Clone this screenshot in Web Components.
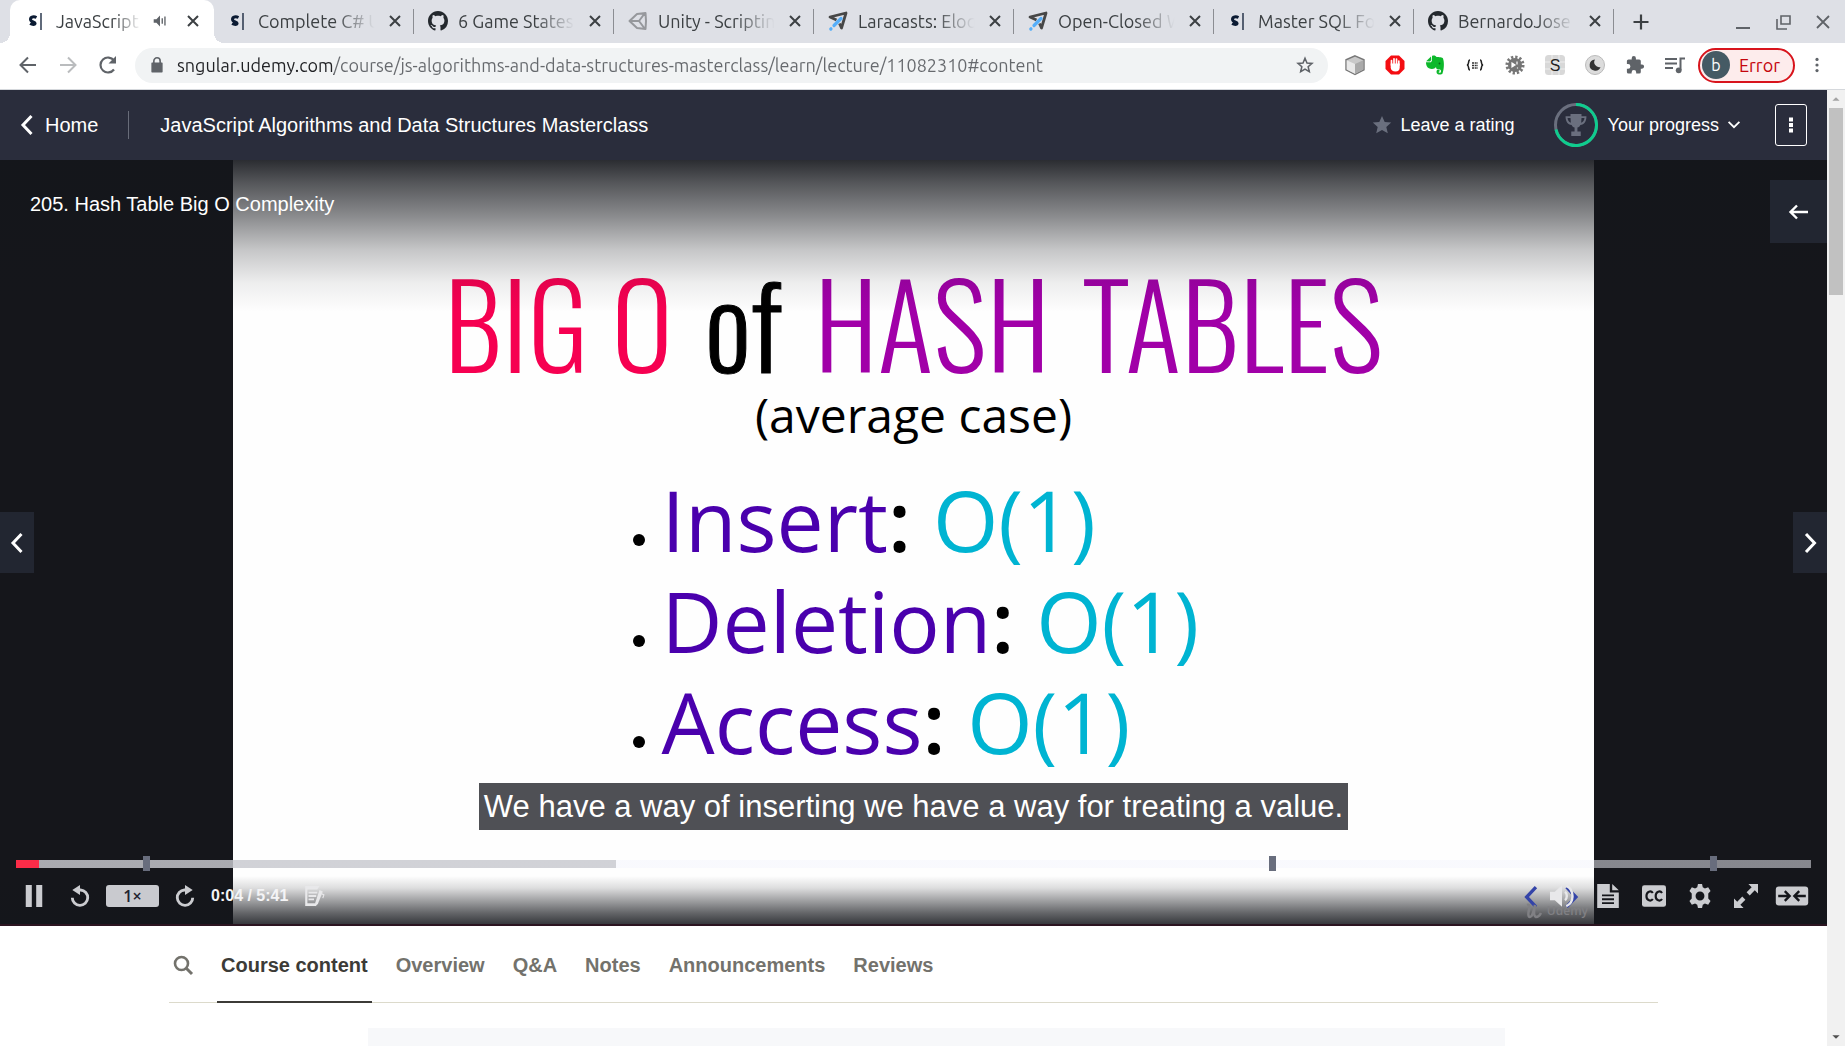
<!DOCTYPE html>
<html lang="en">
<head>
<meta charset="utf-8">
<title>JavaScript Algorithms and Data Structures Masterclass</title>
<style>
html,body{margin:0;height:100%}
body{overflow:hidden;background:#fff;font-family:"Liberation Sans",Arial,sans-serif}
</style>
</head>
<body>
<app-window></app-window>
<script>
const SHAPES = {
  close:'<path d="M5 5l10 10M15 5L5 15" stroke="currentColor" stroke-width="2" fill="none"/>',
  sound:'<path d="M3 8h3l4-4v12l-4-4H3z" fill="currentColor"/><path d="M12.500 7v6M15.500 5v10" stroke="currentColor" stroke-width="1.500"/>',
  sng:'<path d="M11.500 5.500C9 4.300 5.500 4.600 5.500 7.300c0 3 4.600 2.300 4.600 4 0 1.600-3 1.300-5 .2" transform="translate(-1 1)" fill="none" stroke="#0b1b33" stroke-width="3"/><path d="M15 2v17" stroke="#0b1b33" stroke-width="1.300"/>',
  github:'<path transform="scale(1.25)" fill="#24292e" d="M8 0C3.580 0 0 3.580 0 8c0 3.540 2.290 6.530 5.470 7.590.4.070.550-.170.550-.380 0-.190-.010-.820-.010-1.490-2.010.370-2.530-.490-2.690-.940-.090-.230-.480-.940-.820-1.130-.280-.150-.680-.520-.010-.530.630-.010 1.080.580 1.230.820.720 1.210 1.870.870 2.330.660.070-.520.280-.870.510-1.070-1.780-.2-3.640-.890-3.640-3.950 0-.870.310-1.590.820-2.150-.080-.2-.360-1.020.080-2.120 0 0 .670-.210 2.200.820.640-.180 1.320-.270 2-.270s1.360.090 2 .270c1.530-1.040 2.200-.820 2.200-.820.440 1.100.160 1.920.080 2.120.510.560.820 1.270.820 2.150 0 3.070-1.870 3.750-3.650 3.950.290.250.540.730.540 1.480 0 1.070-.010 1.930-.010 2.200 0 .210.150.460.550.380A8.010 8.010 0 0 0 16 8c0-4.420-3.580-8-8-8z"/>',
  unity:'<path d="M1.500 10L9 3l8.500-1 .500 8-.500 8L9 17zM2 10h9M11 10l6-8M11 10l6 8" fill="none" stroke="#96989c" stroke-width="2" stroke-linejoin="round"/>',
  laracasts:'<path d="M8.500 9L2 6l16-4-4.500 15-2-4.500" fill="none" stroke="#474747" stroke-width="2.800" stroke-linejoin="round"/><path d="M13 7.500L6 14.500M2.800 18l.2-.2" stroke="#55aef9" stroke-width="3.200" stroke-linecap="round" fill="none"/>',
  plus:'<path d="M10 2.500v15M2.500 10h15" stroke="currentColor" stroke-width="2.200"/>',
  minimize:'<path d="M3 16h14" stroke="currentColor" stroke-width="2"/>',
  restore:'<path d="M8 4h9v8H8zM4 7v10h10" stroke="currentColor" stroke-width="1.600" fill="none"/>',
  winclose:'<path d="M4 4l12 12M16 4L4 16" stroke="currentColor" stroke-width="1.800"/>',
  back:'<path d="M18 10H3M10 2.500L2.500 10l7.500 7.500" stroke="currentColor" stroke-width="2" fill="none"/>',
  forward:'<path d="M2 10h15M10 2.500l7.500 7.500-7.500 7.500" stroke="currentColor" stroke-width="2" fill="none"/>',
  reload:'<path d="M16 14.500A7.500 7.500 0 1 1 16 5.500" stroke="currentColor" stroke-width="2.200" fill="none"/><path d="M18 1v7.500h-7.500z" fill="currentColor"/>',
  lock:'<path d="M4.500 8h11v9.500h-11z" fill="currentColor" stroke="currentColor" stroke-width="1.500" stroke-linejoin="round"/><path d="M6.500 8V5.500a3.500 3.500 0 0 1 7 0V8" stroke="currentColor" stroke-width="1.800" fill="none"/>',
  star:'<path d="M10 2.500l2.200 5.200 5.600.5-4.300 3.700 1.300 5.500L10 14.500l-4.800 2.900 1.300-5.500L2.200 8.200l5.600-.5z" fill="none" stroke="currentColor" stroke-width="1.700"/>',
  fullstar:'<path d="M10 1l2.700 6 6.500.6-4.900 4.300 1.500 6.400L10 14.900l-5.800 3.400 1.500-6.400L.8 7.600 7.300 7z" fill="currentColor"/>',
  cube:'<path d="M10 .8l9 4v10l-9 4.700-9-4.700v-10z" fill="#c9c9c9" stroke="#777" stroke-width="1.400"/><path d="M1.700 5.200L10 9v9.700l-8.300-4.200z" fill="#e9e9e9"/><path d="M10 9l8.300-3.800v9.300L10 18.700z" fill="#aaa"/>',
  hand:'<path d="M6 .5h8L19.500 6v8L14 19.500H6L.5 14V6z" fill="#f40d12"/><path d="M6.500 10V5.500M9 9V3.800M11.500 9V4M13.800 10V6" stroke="#fff" stroke-width="1.700" stroke-linecap="round"/><path d="M5.700 8.500h9v4c0 2.500-1.500 4-4.200 4s-4.800-1.500-4.800-4z" fill="#fff"/>',
  elephant:'<path d="M6 1.500L1.200 6.200 5 6.500 6.300 5z" fill="#0db82b"/><path d="M7 1c2-1 4 0 4.500 1 2.500 0 6 .2 6.500 1.500 1.500 4 1 11-.5 15-1 1.600-6 1.600-6-1.500 0-2 1.500-2.700 3-2.300v1.700c-1 0-1.200.8-.5 1.200 1.500.6 2-.3 2-1.600 0-2-2.500-1.500-4-2-.8-.4-.8-1-1-2-1.500 3-8 2.200-9-.5C1 9.500 1 8 1 7.200h5L7 5.500z" fill="#0db82b"/><circle cx="14.500" cy="8.500" r=".9" fill="#076818"/>',
  braces:'<path d="M5 5C2.500 5 4.800 9.500 2 10c2.800.5.500 5 3 5M15 5c2.500 0 .2 4.500 3 5-2.800.5-.5 5-3 5" stroke="#222" stroke-width="1.600" fill="none"/><path d="M7 8h6M7 10.500h6M7 13h6" stroke="#333" stroke-width="1.300" stroke-dasharray="2 .7"/>',
  bug:'<circle cx="10" cy="10" r="7.800" fill="none" stroke="#777" stroke-width="3.500" stroke-dasharray="2.200 1.880"/><circle cx="10" cy="10" r="7" fill="#757575"/><path d="M7 8l3 2-3 2zM12 6.500v3M12.500 12.500v1" stroke="#fff" stroke-width="1.200" fill="#fff"/>',
  s:'<rect width="20" height="20" rx="3.500" fill="#d8d8d8"/><path d="M0 7h20M7 0v20M14 0v20M0 14h20" stroke="#eee"/><text x="10" y="15.500" text-anchor="middle" font-family="Liberation Sans" font-size="16" fill="#222">S</text>',
  moon:'<circle cx="10" cy="10" r="9.500" fill="#dcdcdc" stroke="#bbb"/><path d="M10 4.500A5.600 5.600 0 1 0 15.500 12 5 5 0 0 1 10 4.500z" fill="#333"/>',
  puzzle:'<path d="M17 9.500h-1.200V6A1.600 1.600 0 0 0 14.200 4.400h-3.300V3.200a2.100 2.100 0 0 0-4.200 0v1.200H3.500A1.600 1.600 0 0 0 1.900 6v3.100h1.200a2.300 2.300 0 0 1 0 4.600H1.900V17a1.600 1.600 0 0 0 1.600 1.600h3.100v-1.200a2.300 2.300 0 0 1 4.600 0v1.200h3A1.600 1.600 0 0 0 15.800 17v-3.300H17a2.100 2.100 0 0 0 0-4.200z" fill="currentColor"/>',
  queue:'<path d="M0 4h12M0 8.500h12M0 13h8M15.500 15V3.500h4.500" stroke="currentColor" stroke-width="2" fill="none"/><circle cx="13.700" cy="15.300" r="2.900" fill="currentColor"/>',
  kebab:'<g fill="currentColor"><circle cx="10" cy="3" r="2"/><circle cx="10" cy="10" r="2"/><circle cx="10" cy="17" r="2"/></g>',
  dots:'<path fill="currentColor" d="M8 2.500h4v4H8zM8 8h4v4H8zM8 13.500h4v4H8z"/>',
  prev:'<path d="M14.500 1L6 10l8.500 9" fill="none" stroke="currentColor" stroke-width="3"/>',
  next:'<path d="M6 1l8.500 9L6 19" fill="none" stroke="currentColor" stroke-width="3"/>',
  down:'<path d="M4 6.500l6 6 6-6" fill="none" stroke="currentColor" stroke-width="2"/>',
  left:'<path d="M19 10H2M8 3.500L1.500 10 8 16.500" fill="none" stroke="currentColor" stroke-width="2.400"/>',
  trophy:'<path d="M5 0h10v2h4.500c0 5-2 7.500-5.500 8-.6 1.200-1.500 2-2.700 2.300V16h3v4H5.700v-4h3v-3.700C7.500 12 6.600 11.200 6 10 2.500 9.500.500 7 .500 2H5zM2.300 3.700c.3 2.300 1.200 3.800 3 4.300L5 3.700zM17.700 3.700H15L14.700 8c1.800-.5 2.700-2 3-4.300z" fill="#6a6f7e"/>',
  pause:'<path fill="currentColor" d="M2.500 0H8v20H2.500zM12 0h5.500v20H12z"/>',
  rewind:'<path d="M9 4.500h1.500A7 7 0 1 1 3 11.500" fill="none" stroke="currentColor" stroke-width="2.600"/><path d="M10 0v9L3 4.500z" fill="currentColor"/>',
  ahead:'<path d="M11 4.500H9.500A7 7 0 1 0 17 11.500" fill="none" stroke="currentColor" stroke-width="2.600"/><path d="M10 0v9l7-4.500z" fill="currentColor"/>',
  note:'<path d="M2 1h13l-2 3H4v12.500h8V19H2z" fill="currentColor"/><path d="M5 7h8M5 10h7M5 13h5" stroke="currentColor" stroke-width="1.600"/><path d="M15 4.500l3 1.300-4.500 11.500-2.500 2 .2-3.300z" fill="currentColor"/><path d="M17 8l2 1-1 3" fill="none" stroke="currentColor"/>',
  volume:'<path fill="currentColor" d="M0 6.500h4L10 1v18l-6-5.500H0z"/><path d="M12.500 6.500c2 1.500 2 5.500 0 7M13.500 1.500c7 3 7 14 0 17" fill="none" stroke="currentColor" stroke-width="2"/>',
  transcript:'<path fill="currentColor" d="M1 0h10.500v7H19v13H1zM13.500 0L19 5.300h-5.500z"/><path d="M5 9.500h10M5 12.700h10M5 16h10" stroke="#15161b" stroke-width="1.500"/>',
  cc:'<rect y="1" width="20" height="18" rx="2" fill="currentColor"/><path d="M9 7.500c-1.500-2.200-5.300-1.500-5.300 2.500s3.800 4.700 5.300 2.500M16.700 7.500c-1.500-2.200-5.300-1.500-5.300 2.500s3.800 4.700 5.300 2.500" fill="none" stroke="#15161b" stroke-width="1.800"/>',
  gear:'<path fill="currentColor" fill-rule="evenodd" d="M8.300 0h3.400l.6 2.800 1.800 1 2.700-1 2 3-1.900 2.200v4l1.900 2.200-2 3-2.700-1-1.800 1-.6 2.800H8.300l-.6-2.800-1.800-1-2.700 1-2-3L3.100 12V8L1.200 5.800l2-3 2.700 1 1.800-1zM10 6.300a3.700 3.700 0 1 0 0 7.400 3.700 3.700 0 0 0 0-7.400z"/>',
  expand:'<path fill="currentColor" d="M12 0h8v8l-2.700-2.700-4.200 4.200-2.600-2.600 4.200-4.200zM8 20H0v-8l2.700 2.700 4.200-4.200 2.600 2.600-4.200 4.200z"/>',
  narrow:'<rect x="-3.500" y="2" width="27" height="16" rx="2.500" fill="currentColor"/><path d="M-1.500 10h9M4 6l4 4-4 4M21.500 10h-9M16 6l-4 4 4 4" stroke="#15161b" stroke-width="2" fill="none"/>',
  search:'<circle cx="8.500" cy="8.500" r="6.500" fill="none" stroke="currentColor" stroke-width="2.600"/><path d="M13 13l6 6" stroke="currentColor" stroke-width="3"/>',
  triup:'<path d="M6 12l4-4 4 4z" fill="currentColor"/>',
  tridown:'<path d="M6 8l4 4 4-4z" fill="currentColor"/>'
};

const RESET = `*{box-sizing:border-box}
button{font:inherit;color:inherit;background:none;border:0;padding:0;margin:0;display:flex;align-items:center;justify-content:center;flex:none}
a{color:inherit;text-decoration:none}`;

class BaseElement extends HTMLElement {
  connectedCallback() {
    if (this.shadowRoot) return;
    this.attachShadow({mode:'open'}).innerHTML = `<style>${RESET}${this.styles()}</style>${this.markup()}`;
  }
  styles() { return ''; }
  markup() { return ''; }
}
const define = (name, styles, markup) => customElements.define(name, class extends BaseElement {
  styles() { return styles; }
  markup() { return typeof markup === 'function' ? markup(this) : markup; }
});

define('ui-icon',
  ':host{display:block;width:20px;height:20px;flex:none}svg{display:block;width:100%;height:100%;overflow:visible}',
  el => `<svg viewBox="0 0 20 20" aria-hidden="true">${SHAPES[el.getAttribute('name')]}</svg>`);

define('browser-tab', `
:host{display:flex;box-sizing:border-box;align-items:center;flex:0 0 200px;min-width:0;height:43px;padding:0 9px 1px 14px;position:relative;color:#3c4043}
:host([line])::after{content:"";position:absolute;right:0;top:9px;width:1px;height:25px;background:#8b8d92}
:host([active]){flex-basis:204px;background:#fff;border-radius:10px 10px 0 0;padding-left:16px;padding-right:11px}
:host([active])::before,:host([active])::after{content:"";position:absolute;bottom:0;width:10px;height:10px}
:host([active])::before{left:-10px;background:radial-gradient(circle at 0 0,transparent 10px,#fff 10px)}
:host([active])::after{right:-10px;background:radial-gradient(circle at 100% 0,transparent 10px,#fff 10px)}
.title{flex:1;min-width:0;overflow:hidden;white-space:nowrap;margin:0 8px 0 10px;font-size:18px;line-height:24px;text-align:left;justify-content:flex-start;-webkit-mask-image:linear-gradient(to right,#000 65%,transparent 98%);mask-image:linear-gradient(to right,#000 65%,transparent 98%)}
.sound{width:18px;height:18px;margin-right:14px;color:#5f6368}
`, el => `<ui-icon name="${el.getAttribute('icon')}"></ui-icon><button class="title"><slot></slot></button>
${el.hasAttribute('sound') ? '<ui-icon class="sound" name="sound"></ui-icon>' : ''}<button aria-label="Close tab"><ui-icon name="close"></ui-icon></button>`);

define('tab-strip', `
:host{display:flex;height:43px;background:#dee0e6;padding-left:10px;color:#3c4043}
.new{width:54px;height:43px}
.win{margin-left:auto;display:flex;gap:20px;padding-right:12px;height:43px;align-items:center;color:#5f6368}
`, `
<browser-tab active sound icon="sng">JavaScript Algorithms</browser-tab>
<browser-tab line icon="sng">Complete C# Unity</browser-tab>
<browser-tab line icon="github">6 Game States</browser-tab>
<browser-tab line icon="unity">Unity - Scripting</browser-tab>
<browser-tab line icon="laracasts">Laracasts: Eloquent</browser-tab>
<browser-tab line icon="laracasts">Open-Closed Wins</browser-tab>
<browser-tab line icon="sng">Master SQL For</browser-tab>
<browser-tab line icon="github">BernardoJose</browser-tab>
<button class="new" aria-label="New tab"><ui-icon name="plus"></ui-icon></button>
<div class="win"><button aria-label="Minimize"><ui-icon name="minimize"></ui-icon></button><button aria-label="Restore"><ui-icon name="restore"></ui-icon></button><button aria-label="Close"><ui-icon name="winclose"></ui-icon></button></div>`);

define('tool-bar', `
:host{display:flex;box-sizing:border-box;align-items:center;height:47px;border-bottom:1px solid #d5d8dc;background:#fff;padding:0 18px 2px;color:#5f6368}
.nav{display:flex;gap:20px;margin-right:17px}
.nav button:nth-child(2){color:#babcbe}
.omni{flex:1;display:flex;align-items:center;height:35px;border-radius:18px;background:#f1f3f4;padding:0 14px 0 13px}
.omni ui-icon:first-child{width:18px;height:18px}
input{flex:1;min-width:0;border:0;outline:0;padding:0;margin:0 12px 0 11px;height:30px;font:18px/24px Ubuntu,"Noto Sans",sans-serif;color:#5f6368;background:linear-gradient(to right,#202124 157px,#66696d 157px);-webkit-background-clip:text;background-clip:text;-webkit-text-fill-color:transparent}
.ext{display:flex;gap:20px;margin:0 13px 0 17px}
.pill{height:35px;border:2px solid #d8141c;border-radius:18px;background:#fdecec;color:#c5050c;font-size:18px;line-height:24px;padding:0 13px 0 2px;gap:9px}
.pill b{display:flex;align-items:center;justify-content:center;width:28px;height:28px;border-radius:50%;background:#455a64;color:#fff;font-size:16px;font-weight:400}
.more{margin-left:12px}
.more ui-icon{height:16px}
`, `
<div class="nav"><button aria-label="Back"><ui-icon name="back"></ui-icon></button><button aria-label="Forward"><ui-icon name="forward"></ui-icon></button><button aria-label="Reload"><ui-icon name="reload"></ui-icon></button></div>
<div class="omni"><ui-icon name="lock"></ui-icon><input aria-label="Address" value="sngular.udemy.com/course/js-algorithms-and-data-structures-masterclass/learn/lecture/11082310#content"><button aria-label="Bookmark"><ui-icon name="star"></ui-icon></button></div>
<div class="ext">${['cube','hand','elephant','braces','bug','s','moon','puzzle','queue'].map(n => `<button aria-label="${n}"><ui-icon name="${n}"></ui-icon></button>`).join('')}</div>
<button class="pill"><b>b</b>Error</button>
<button class="more" aria-label="Menu"><ui-icon name="kebab"></ui-icon></button>`);

define('course-header', `
:host{display:flex;box-sizing:border-box;align-items:center;height:70px;background:#2a2d3c;color:#fff;padding:0 20px 1px 17px;font-size:20px;line-height:24px}
.home{display:flex;align-items:center;gap:8px}
.home ui-icon{width:20px;height:22px}
.rule{width:1px;height:28px;background:#686c79;margin:0 31px 0 30px}
h1{font:inherit;margin:0;flex:1;min-width:0;white-space:nowrap}
.small{font-size:18px;margin-right:38px}
.small ui-icon{color:#6a6f7e;margin-right:9px}
.progress{margin-right:32px}
.ring{display:block;width:46px;height:46px;margin-right:9px}
.progress>ui-icon:last-child{color:#fff;width:18px;height:18px;margin:0 0 0 6px}
.box{width:32px;height:42px;border:1px solid #fff;border-radius:3px}
`, `
<a class="home" href="#"><ui-icon name="prev"></ui-icon>Home</a><span class="rule"></span>
<h1>JavaScript Algorithms and Data Structures Masterclass</h1>
<button class="small"><ui-icon name="fullstar"></ui-icon>Leave a rating</button>
<button class="small progress"><svg class="ring" viewBox="0 0 46 46" fill="none" stroke-width="3"><circle cx="23" cy="23" r="20.500" stroke="#6a6f7e"/><path d="M23 2.500A20.500 20.500 0 1 1 3 27.500" stroke="#0fcc8e"/><g transform="translate(12 12) scale(1.100)">${SHAPES.trophy.replace('/>', ' stroke="none"/>')}</g></svg>Your progress<ui-icon name="down"></ui-icon></button>
<button class="box" aria-label="More"><ui-icon name="dots"></ui-icon></button>`);

define('slide-row', `
:host{display:flex;align-items:center;height:101px;font-size:84px;line-height:101px;white-space:pre;color:#4a00ad}
i{width:12px;height:12px;border-radius:50%;background:#000;margin:40px 17px 0 0}
b{color:#000;font-weight:600}
span{color:#00b4d2}
`, el => `<i></i><slot></slot><b>:</b><span> ${el.getAttribute('cost')}</span>`);

define('lecture-slide', `
:host{display:flex;box-sizing:border-box;flex-direction:column;align-items:center;height:100%;aspect-ratio:16/9;background:#fefefe;font-family:"Open Sans","Noto Sans",sans-serif;color:#000;padding-top:96px;overflow:hidden}
h2{display:flex;gap:32px;margin:0;font:300 116px/130px Oswald,"Liberation Sans Narrow",sans-serif;white-space:nowrap;color:#a100a8}
.pink{color:#f60051}.of{color:#000;font-weight:300;-webkit-text-stroke:1px #000}
p{margin:0;font-size:48px;line-height:58px}
.list{margin-top:25px;align-self:flex-start;padding-left:400px}
`, `
<h2><span class="pink">BIG O</span><span class="of">of</span><span>HASH</span><span>TABLES</span></h2>
<p>(average case)</p>
<div class="list"><slide-row cost="O(1)">Insert</slide-row><slide-row cost="O(1)">Deletion</slide-row><slide-row cost="O(1)">Access</slide-row></div>`);

define('control-bar', `
:host{display:flex;flex-direction:column;padding:0 16px;color:#cbccd0}
.seek{position:relative;display:flex;height:15px;align-items:center}
input{appearance:none;-webkit-appearance:none;width:100%;height:8px;margin:0;border-radius:0;background:linear-gradient(to right,#fb2c48 0 1.300%,rgba(200,201,207,.83) 1.300% 33.400%,rgba(244,245,253,.51) 33.400%)}
input::-webkit-slider-thumb{-webkit-appearance:none;width:0;height:0}
.seek i{position:absolute;top:0;width:7px;height:15px;background:#686d7d}
.row{display:flex;align-items:center;height:50px}
.row>*{flex:none}
.left{display:flex;align-items:center;gap:15px}
.left ui-icon{width:22px;height:22px}
.speed{width:53px;height:22px;border-radius:3px;background:#c9cacf;color:#22232f;font:600 16px/20px "Open Sans",sans-serif}
.p{width:36px;height:20px;margin-right:2px}
.time{font-weight:700;font-size:16px;line-height:20px;color:#f4f4f6}
.row .gap{flex:1}
.right{display:flex;gap:22px;padding-right:7px}
.right ui-icon{width:24px;height:24px}
.n,.v{color:#e8e8ea}
`, `
<div class="seek"><input type="range" min="0" max="341" value="4" aria-label="Seek"><i style="left:7.1%"></i><i style="left:69.8%"></i><i style="left:94.4%"></i></div>
<div class="row"><div class="left"><button class="p" aria-label="Pause"><ui-icon name="pause"></ui-icon></button><button aria-label="Rewind"><ui-icon name="rewind"></ui-icon></button><button class="speed">1×</button><button aria-label="Forward"><ui-icon name="ahead"></ui-icon></button><span class="time">0:04 / 5:41</span><button class="n" aria-label="Add note"><ui-icon name="note"></ui-icon></button></div>
<span class="gap"></span>
<div class="right"><button class="v" aria-label="Volume"><ui-icon name="volume"></ui-icon></button>${['transcript','cc','gear','expand','narrow'].map(n => `<button aria-label="${n}"><ui-icon name="${n}"></ui-icon></button>`).join('')}</div></div>`);

define('video-player', `
:host{display:flex;justify-content:center;position:relative;height:calc(100vh - 280px);background:#15161b;overflow:hidden}
.shade{position:absolute;inset:0;background:linear-gradient(to bottom,rgba(20,22,27,.9) 0,rgba(20,22,27,.72) 23px,rgba(20,22,27,.49) 57px,rgba(20,22,27,.24) 90px,rgba(20,22,27,.07) 123px,rgba(20,22,27,0) 152px),linear-gradient(to top,#2b1420 2px,rgba(20,22,27,.85) 2px,rgba(20,22,27,.66) 13px,rgba(20,22,27,.33) 29px,rgba(20,22,27,.14) 38px,rgba(20,22,27,0) 50px)}
.name{position:absolute;left:30px;top:32px;font-size:20px;line-height:24px;color:#fff}
.side{position:absolute;background:#222631;color:#fff}
.open{right:0;top:20px;width:57px;height:63px}
.prev,.next{top:352px;height:61px;width:34px}
.prev{left:0}.next{right:0}
.caption{position:absolute;left:0;right:0;bottom:96px;display:flex;justify-content:center}
.caption span{background:#4f5055;color:#fff;font-size:31px;line-height:47px;padding:0 5px}
.mark{position:absolute;right:239px;bottom:7px;display:flex;flex-direction:column;align-items:flex-end;color:#3444a8}
.mark div{display:flex;gap:16px;margin-right:5px}
.mark ui-icon{width:24px;height:22px}
.mark span{font:600 12px/16px "Open Sans",sans-serif;color:#808084;display:flex;align-items:center;gap:3px;margin-top:-5px}
.mark svg{display:block;width:18px;height:16px}
control-bar{position:absolute;left:0;right:0;bottom:5px}
`, `
<lecture-slide></lecture-slide><div class="shade"></div>
<div class="name">205. Hash Table Big O Complexity</div>
<button class="side open" aria-label="Open sidebar"><ui-icon name="left"></ui-icon></button>
<button class="side prev" aria-label="Previous"><ui-icon name="prev"></ui-icon></button>
<button class="side next" aria-label="Next"><ui-icon name="next"></ui-icon></button>
<div class="caption"><span>We have a way of inserting we have a way for treating a value.</span></div>
<div class="mark"><div><ui-icon name="prev"></ui-icon><ui-icon name="next"></ui-icon></div><span><svg viewBox="0 0 18 16" fill="none" stroke="#808084" stroke-width="2.500"><path d="M1 2c3-1 3 2 2 5s-1 7 1 7 4-6 5-12c-1 5-2 11 1 12 2 0 4-2 5-4"/></svg>Udemy</span></div>
<control-bar></control-bar>`);

define('lecture-tabs', `
:host{display:block;padding:0 169px}
nav{display:flex;align-items:flex-end;height:77px;gap:20px;border-bottom:1px solid #dcdacb;font-size:20px;font-weight:700;line-height:24px;color:#73726c}
a{padding:10px 4px 0;height:60px;margin-bottom:-1px}
a.on{color:#3c3b37;border-bottom:2px solid #3c3b37}
button{height:60px;padding:0 0 14px 4px;margin-right:4px}
section{height:20px;margin:25px 153px 0 199px;background:#f7f8fa}
`, `
<nav><button aria-label="Search"><ui-icon name="search"></ui-icon></button><a class="on" href="#">Course content</a><a href="#">Overview</a><a href="#">Q&amp;A</a><a href="#">Notes</a><a href="#">Announcements</a><a href="#">Reviews</a></nav><section></section>`);

define('scroll-track', `
:host{display:flex;flex-direction:column;align-items:center;justify-content:space-between;width:18px;flex:none;background:#f1f1f1;color:#505050}
ui-icon{width:18px;height:18px}
ui-icon:first-of-type{color:#a3a3a3}
.thumb{width:14px;height:187px;background:#c1c1c1;margin-bottom:auto}
`, '<ui-icon name="triup"></ui-icon><div class="thumb"></div><ui-icon name="tridown"></ui-icon>');

define('app-window', `
:host{display:flex;flex-direction:column;height:100vh;overflow:hidden}
tab-strip,tool-bar{font-family:Ubuntu,"Noto Sans",sans-serif;flex:none}
.body{flex:1;display:flex;min-height:0}
main{flex:1;min-width:0;overflow:hidden}
`, `<tab-strip></tab-strip><tool-bar></tool-bar><div class="body"><main><course-header></course-header><video-player></video-player><lecture-tabs></lecture-tabs></main><scroll-track></scroll-track></div>`);
</script>
</body>
</html>
